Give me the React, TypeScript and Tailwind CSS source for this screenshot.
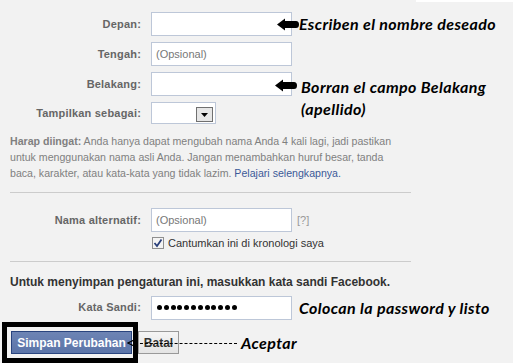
import React from "react";

const labelCls =
  "w-[141px] shrink-0 text-right text-[11px] font-bold text-[#666] tracking-[0.2px]";
const inputCls = "ml-[10px] h-[24px] border border-[#bdc7d8] bg-white shrink-0";
const noteCls =
  "text-[16px] font-bold italic text-black whitespace-nowrap leading-none tracking-[0.4px]";

function Arrow() {
  return (
    <svg width="22" height="13" viewBox="0 0 22 13" className="shrink-0">
      <path d="M0 6.5 L8 0.5 L8 3 L19 3 Q22 3 22 6.5 Q22 10 19 10 L8 10 L8 12.5 Z" fill="#000" />
    </svg>
  );
}

function Row({ label, children }: { label: string; children: React.ReactNode }) {
  return (
    <div className="flex items-center h-[24px]">
      <div className={labelCls}>{label}</div>
      {children}
    </div>
  );
}

export default function App() {
  return (
    <div
      className="w-[513px] h-[363px] bg-[#f2f2f2] overflow-hidden flex flex-col"
      style={{ fontFamily: '"Liberation Sans", Arial, sans-serif' }}
    >
      <div className="h-[2px] flex justify-end shrink-0">
        <div className="w-[97px] bg-white" />
      </div>
      <div className="flex flex-col gap-[6px] pt-[10px]">
        <Row label="Depan:">
          <div className={inputCls + " w-[141px]"} />
          <div className="-ml-[15px] flex items-center gap-[0px]" style={{ fontFamily: "Lato, sans-serif" }}>
            <Arrow />
            <span className={noteCls}>Escriben el nombre deseado</span>
          </div>
        </Row>
        <Row label="Tengah:">
          <div className={inputCls + " w-[141px] flex items-center pl-[4px] text-[11px] text-[#777]"}>(Opsional)</div>
        </Row>
        <Row label="Belakang:">
          <div className={inputCls + " w-[141px]"} />
          <div className="-ml-[17px] mt-[2px] flex items-center gap-[5px]">
            <Arrow />
          </div>
        </Row>
      </div>
      <div className="flex h-[22px] items-center mt-[6px] relative">
        <div className={labelCls}>Tampilkan sebagai:</div>
        <div className="ml-[10px] w-[65px] h-[22px] border border-[#bdc7d8] bg-white flex items-end justify-end pr-[2px] pb-[1px]">
          <div className="w-[17px] h-[15px] border border-[#707070] bg-[#e6e6e6] flex items-center justify-center">
            <svg width="7" height="4" viewBox="0 0 7 4"><path d="M0 0 H7 L3.5 4 Z" fill="#000" /></svg>
          </div>
        </div>
        <div
          className="absolute left-[301px] -top-[23px] flex flex-col gap-[6px]"
          style={{ fontFamily: "Lato, sans-serif" }}
        >
          <span className={noteCls}>Borran el campo Belakang</span>
          <span className={noteCls}>(apellido)</span>
        </div>
      </div>

      <div className="mt-[9px] ml-[10px] w-[392px] text-[10.6px] leading-[16px] text-[#808080]">
        <span className="font-bold">Harap diingat:</span> Anda hanya dapat mengubah nama Anda 4 kali lagi, jadi pastikan
        untuk menggunakan nama asli Anda. Jangan menambahkan huruf besar, tanda baca, karakter, atau kata-kata yang
        tidak lazim. <span className="text-[#3b5998]">Pelajari selengkapnya.</span>
      </div>

      <div className="mx-[10px] mt-[11px] w-[401px] h-px bg-[#cccccc]" />

      <div className="flex items-center h-[24px] mt-[15px]">
        <div className={labelCls}>Nama alternatif:</div>
        <div className={inputCls + " w-[141px] flex items-center pl-[4px] text-[11px] text-[#777]"}>(Opsional)</div>
        <span className="ml-[5px] text-[11px] text-[#999]">[?]</span>
      </div>
      <div className="flex items-center mt-[4px] ml-[152px] h-[14px]">
        <svg width="12" height="12" viewBox="0 0 12 12" className="shrink-0">
          <rect x="0.5" y="0.5" width="11" height="11" fill="#f4f4f4" stroke="#8f8f8f" />
          <path d="M2.5 6 L5 9 L9.5 2.5" fill="none" stroke="#2a3f7a" strokeWidth="1.8" />
        </svg>
        <span className="ml-[4px] text-[11px] text-[#333]">Cantumkan ini di kronologi saya</span>
      </div>

      <div className="mx-[10px] mt-[11px] w-[401px] h-px bg-[#cccccc]" />

      <div className="mt-[13px] px-[10px] text-[12px] font-bold text-[#333] leading-[15px] whitespace-nowrap">
        Untuk menyimpan pengaturan ini, masukkan kata sandi Facebook.
      </div>

      <div className="flex items-center h-[23px] mt-[6px]">
        <div className={labelCls}>Kata Sandi:</div>
        <div className={inputCls + " w-[141px] h-[23px] flex items-center pl-[5px] gap-[1.8px]"}>
          {Array.from({ length: 12 }).map((_, i) => (
            <div key={i} className="w-[5px] h-[5px] rounded-full bg-black" />
          ))}
        </div>
        <span className={noteCls + " ml-[7px]"} style={{ fontFamily: "Lato, sans-serif" }}>
          Colocan la password y listo
        </span>
      </div>

      <div className="relative flex items-start mt-[3px] ml-[2px]">
        <div className="w-[136px] h-[41px] border-[5px] border-black pt-[4px] pl-[4px]">
          <div className="w-[121px] h-[23px] bg-gradient-to-b from-[#6d84b4] to-[#5b74a8] border border-[#29447e] flex items-center justify-center text-white text-[12px] font-bold">
            Simpan Perubahan
          </div>
        </div>
        <div className="mt-[9px] w-[41px] h-[23px] bg-gradient-to-b from-[#f5f5f5] to-[#e4e4e4] border border-[#999] flex items-center justify-center text-[12px] font-bold text-[#333]">
          Batal
        </div>
        <div className="absolute left-[125px] top-[13px] flex items-center">
          <svg width="8" height="8" viewBox="0 0 8 8" className="shrink-0">
            <path d="M7 1 L1 4 L7 7" fill="none" stroke="#000" strokeWidth="1.3" />
          </svg>
          <div className="w-[102px] border-t-[1.5px] border-dashed border-black" />
          <span className={noteCls + " ml-[4px]"} style={{ fontFamily: "Lato, sans-serif" }}>
            Aceptar
          </span>
        </div>
      </div>
    </div>
  );
}
